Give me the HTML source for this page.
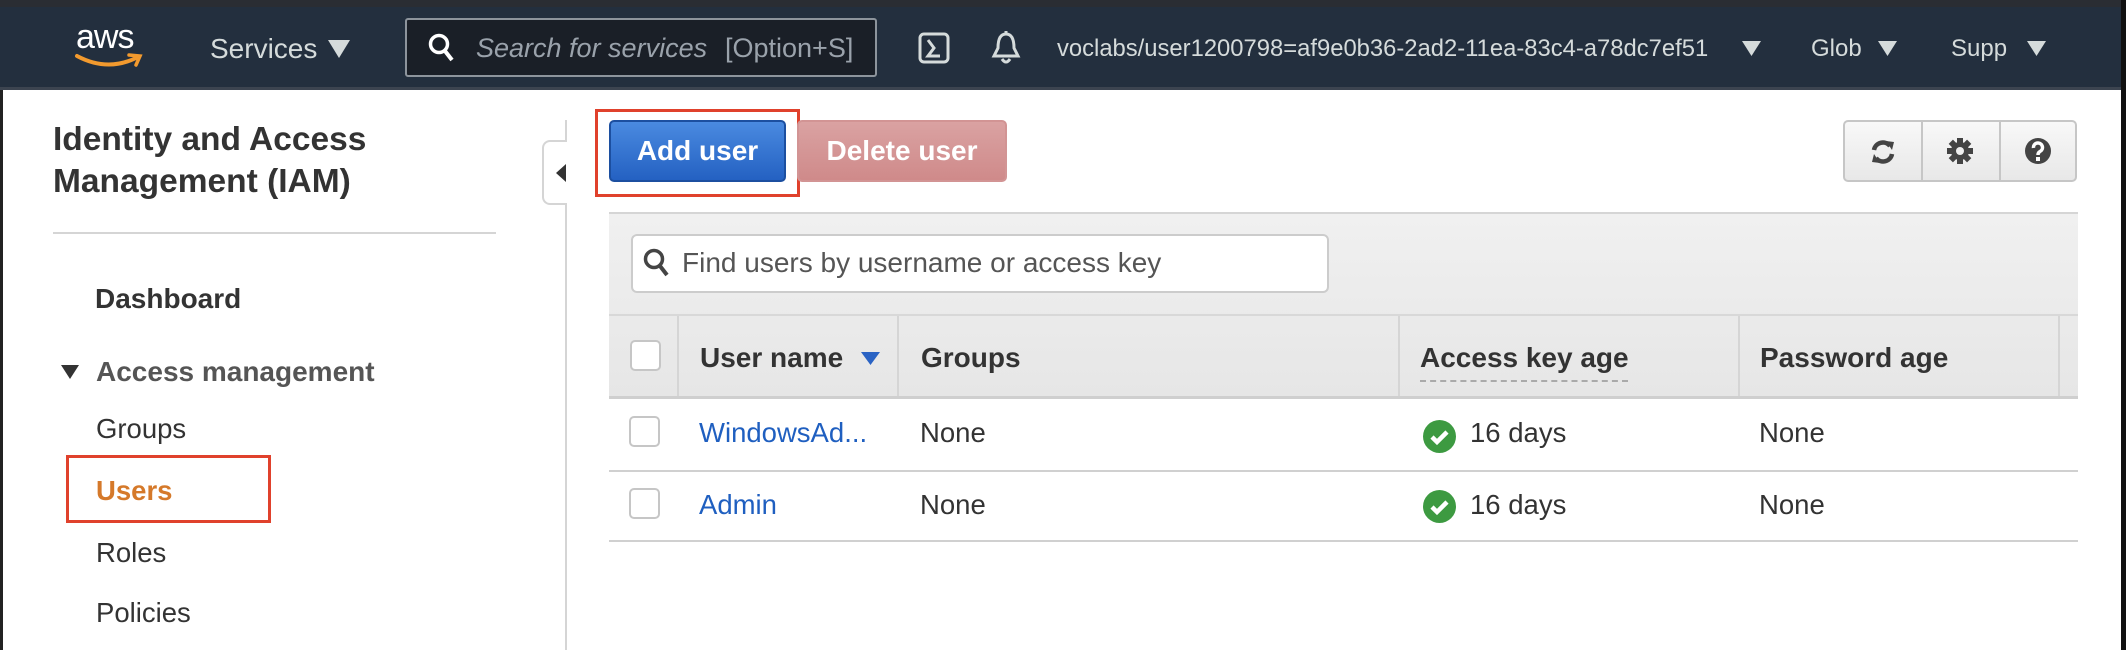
<!DOCTYPE html>
<html><head><meta charset="utf-8"><style>
*{margin:0;padding:0;box-sizing:border-box}
body{width:2126px;height:650px;overflow:hidden;background:#fff;font-family:"Liberation Sans",Arial,sans-serif;position:relative;color:#333}
.a{position:absolute;white-space:nowrap}
.nav{position:absolute;left:0;top:0;width:2126px;height:90px;background:#232f3e;border-top:7px solid #2a2d33;border-bottom:3px solid #3c4450}
.nt{color:#d5dbdb;font-size:27px}
.side{font-size:27.5px;color:#333}
.hd{font-weight:bold;font-size:28px;color:#333}
.cb{position:absolute;width:31px;height:31px;border:2px solid #c6c6c6;border-radius:5px;background:#fff}
.ck{position:absolute;width:33px;height:33px;border-radius:50%;background:#3d9a41}
</style></head><body>
<div class="nav"></div>
<div class="a" style="left:76px;top:18px;font-size:34px;color:#fff;letter-spacing:-1px">aws</div>
<svg class="a" style="left:74px;top:52px" width="70" height="20" viewBox="0 0 70 20"><path d="M3 4 Q33 20 62 6" stroke="#f29a2e" stroke-width="4" fill="none" stroke-linecap="round"/><path d="M55 3 L66 4 L62 13" stroke="#f29a2e" stroke-width="3.5" fill="none" stroke-linecap="round"/></svg>
<div class="a nt" style="left:210px;top:33px;font-size:28px">Services</div>
<svg class="a" style="left:328px;top:40px" width="22" height="18"><path d="M0 0H22L11 18Z" fill="#d5dbdb"/></svg>
<div class="a" style="left:405px;top:18px;width:472px;height:59px;background:#1a1f27;border:2px solid #8d949c;border-radius:3px"></div>
<svg class="a" style="left:428px;top:33px" width="28" height="32"><circle cx="11" cy="11" r="8.5" stroke="#fff" stroke-width="3.5" fill="none"/><path d="M17 18L24 27" stroke="#fff" stroke-width="4"/></svg>
<div class="a" style="left:476px;top:33px;font-size:27px;color:#9aa2ab;font-style:italic">Search for services</div>
<div class="a" style="left:725px;top:33px;font-size:27px;color:#9aa2ab">[Option+S]</div>
<svg class="a" style="left:918px;top:32px" width="32" height="32"><rect x="2" y="2" width="28" height="28" rx="4" stroke="#d5dbdb" stroke-width="3" fill="none"/><path d="M10 8L16 16L10 24H22" stroke="#d5dbdb" stroke-width="3" fill="none"/></svg>
<svg class="a" style="left:990px;top:30px" width="32" height="36"><path d="M16 4C9 4 8 12 8 18L4 26H28L24 18C24 12 23 4 16 4Z" stroke="#d5dbdb" stroke-width="3" fill="none"/><path d="M12 29Q16 35 20 29" stroke="#d5dbdb" stroke-width="3" fill="none"/><path d="M16 1V4" stroke="#d5dbdb" stroke-width="3"/></svg>
<div class="a nt" style="left:1057px;top:35px;font-size:23.8px">voclabs/user1200798=af9e0b36-2ad2-11ea-83c4-a78dc7ef51</div>
<svg class="a" style="left:1742px;top:41px" width="19" height="15"><path d="M0 0H19L9.5 15Z" fill="#d5dbdb"/></svg>
<div class="a nt" style="left:1811px;top:35px;font-size:24px">Glob</div>
<svg class="a" style="left:1878px;top:41px" width="19" height="15"><path d="M0 0H19L9.5 15Z" fill="#d5dbdb"/></svg>
<div class="a nt" style="left:1951px;top:35px;font-size:24px">Supp</div>
<svg class="a" style="left:2027px;top:41px" width="19" height="15"><path d="M0 0H19L9.5 15Z" fill="#d5dbdb"/></svg>
<div class="a" style="left:0;top:90px;width:3px;height:560px;background:#222"></div>
<div class="a" style="left:2121px;top:0;width:5px;height:650px;background:#111"></div>

<div class="a" style="left:53px;top:119px;font-size:33.5px;font-weight:bold;line-height:42px;color:#333">Identity and Access<br>Management (IAM)</div>
<div class="a" style="left:53px;top:232px;width:443px;height:2px;background:#d5d5d5"></div>
<div class="a hd" style="left:95px;top:283px">Dashboard</div>
<svg class="a" style="left:61px;top:365px" width="18" height="14"><path d="M0 0H18L9 14Z" fill="#333"/></svg>
<div class="a side" style="left:96px;top:356px;font-weight:bold;color:#555;font-size:28px">Access management</div>
<div class="a side" style="left:96px;top:413px">Groups</div>
<div class="a" style="left:66px;top:455px;width:205px;height:68px;border:3px solid #e0412c"></div>
<div class="a side" style="left:96px;top:475px;font-weight:bold;color:#d5792a">Users</div>
<div class="a side" style="left:96px;top:537px">Roles</div>
<div class="a side" style="left:96px;top:597px">Policies</div>
<div class="a" style="left:565px;top:120px;width:2px;height:530px;background:#d5d5d5"></div>
<div class="a" style="left:542px;top:140px;width:25px;height:65px;background:#fff;border:2px solid #d5d5d5;border-right:none;border-radius:8px 0 0 8px"></div>
<svg class="a" style="left:556px;top:164px" width="10" height="18"><path d="M10 0V18L0 9Z" fill="#333"/></svg>

<div class="a" style="left:595px;top:109px;width:205px;height:88px;border:3px solid #e0412c"></div>
<div class="a" style="left:609px;top:120px;width:177px;height:62px;background:linear-gradient(#4a8ae0,#2461c2);border:2px solid #1c4fa0;border-radius:5px;color:#fff;font-weight:bold;font-size:28px;text-align:center;line-height:58px">Add user</div>
<div class="a" style="left:797px;top:120px;width:210px;height:62px;background:linear-gradient(#daa2a2,#cf8a8a);border:2px solid #d29494;border-radius:5px;color:#fff;font-weight:bold;font-size:28px;text-align:center;line-height:58px">Delete user</div>
<div class="a" style="left:1843px;top:120px;width:234px;height:62px;background:linear-gradient(#f8f8f8,#e8e8e8);border:2px solid #c6c6c6;border-radius:5px"></div>
<div class="a" style="left:1921px;top:120px;width:2px;height:62px;background:#c6c6c6"></div>
<div class="a" style="left:1999px;top:120px;width:2px;height:62px;background:#c6c6c6"></div>
<svg class="a" style="left:1869px;top:138px" width="28" height="28" viewBox="0 0 28 28"><path d="M5 12A9 9 0 0 1 21 8" stroke="#444" stroke-width="4.5" fill="none"/><path d="M17 3L25 4L23 12Z" fill="#444"/><path d="M23 16A9 9 0 0 1 7 20" stroke="#444" stroke-width="4.5" fill="none"/><path d="M11 25L3 24L5 16Z" fill="#444"/></svg>
<svg class="a" style="left:1946px;top:137px" width="28" height="28" viewBox="0 0 28 28"><g fill="#444"><circle cx="14" cy="14" r="9"/><rect x="11" y="1" width="6" height="26"/><rect x="1" y="11" width="26" height="6"/><rect x="11" y="1" width="6" height="26" transform="rotate(45 14 14)"/><rect x="11" y="1" width="6" height="26" transform="rotate(-45 14 14)"/></g><circle cx="14" cy="14" r="4" fill="#eee"/></svg>
<svg class="a" style="left:2024px;top:137px" width="28" height="28" viewBox="0 0 28 28"><circle cx="14" cy="14" r="13" fill="#444"/><path d="M9.5 11A4.5 4.5 0 1 1 16 14.5Q14 15.5 14 18" stroke="#fff" stroke-width="3.5" fill="none"/><rect x="12" y="20" width="4" height="4" fill="#fff"/></svg>

<div class="a" style="left:609px;top:212px;width:1469px;height:186px;background:linear-gradient(#f0f0f0,#e6e6e6);border-top:2px solid #d5d5d5"></div>
<div class="a" style="left:631px;top:234px;width:698px;height:59px;background:#fff;border:2px solid #ccc;border-radius:6px"></div>
<svg class="a" style="left:643px;top:248px" width="28" height="32"><circle cx="11" cy="11" r="8.5" stroke="#444" stroke-width="3.5" fill="none"/><path d="M17 18L24 27" stroke="#444" stroke-width="4"/></svg>
<div class="a" style="left:682px;top:247px;font-size:28px;color:#555">Find users by username or access key</div>
<div class="a" style="left:609px;top:314px;width:1469px;height:2px;background:#d8d8d8"></div>
<div class="a" style="left:609px;top:396px;width:1469px;height:3px;background:#cfcfcf"></div>
<div class="a" style="left:677px;top:316px;width:2px;height:80px;background:#d5d5d5"></div>
<div class="a" style="left:897px;top:316px;width:2px;height:80px;background:#d5d5d5"></div>
<div class="a" style="left:1398px;top:316px;width:2px;height:80px;background:#d5d5d5"></div>
<div class="a" style="left:1738px;top:316px;width:2px;height:80px;background:#d5d5d5"></div>
<div class="a" style="left:2058px;top:316px;width:2px;height:80px;background:#d5d5d5"></div>
<div class="cb" style="left:630px;top:340px"></div>
<div class="a hd" style="left:700px;top:342px">User name</div>
<svg class="a" style="left:861px;top:352px" width="19" height="13"><path d="M0 0H19L9.5 13Z" fill="#2a63c4"/></svg>
<div class="a hd" style="left:921px;top:342px">Groups</div>
<div class="a hd" style="left:1420px;top:342px">Access key age</div>
<div class="a" style="left:1420px;top:380px;width:208px;border-top:2px dashed #aaa"></div>
<div class="a hd" style="left:1760px;top:342px">Password age</div>

<div class="cb" style="left:629px;top:416px"></div>
<div class="a" style="left:699px;top:417px;font-size:27.5px;color:#1f5fc0">WindowsAd...</div>
<div class="a side" style="left:920px;top:417px">None</div>
<div class="ck" style="left:1423px;top:420px"></div>
<svg class="a" style="left:1423px;top:420px" width="33" height="33"><path d="M9 17L14 22L24 12" stroke="#fff" stroke-width="4.5" fill="none"/></svg>
<div class="a side" style="left:1470px;top:417px">16 days</div>
<div class="a side" style="left:1759px;top:417px">None</div>
<div class="a" style="left:609px;top:470px;width:1469px;height:2px;background:#d0d0d0"></div>

<div class="cb" style="left:629px;top:488px"></div>
<div class="a" style="left:699px;top:489px;font-size:27.5px;color:#1f5fc0">Admin</div>
<div class="a side" style="left:920px;top:489px">None</div>
<div class="ck" style="left:1423px;top:490px"></div>
<svg class="a" style="left:1423px;top:490px" width="33" height="33"><path d="M9 17L14 22L24 12" stroke="#fff" stroke-width="4.5" fill="none"/></svg>
<div class="a side" style="left:1470px;top:489px">16 days</div>
<div class="a side" style="left:1759px;top:489px">None</div>
<div class="a" style="left:609px;top:540px;width:1469px;height:2px;background:#d0d0d0"></div>
</body></html>
